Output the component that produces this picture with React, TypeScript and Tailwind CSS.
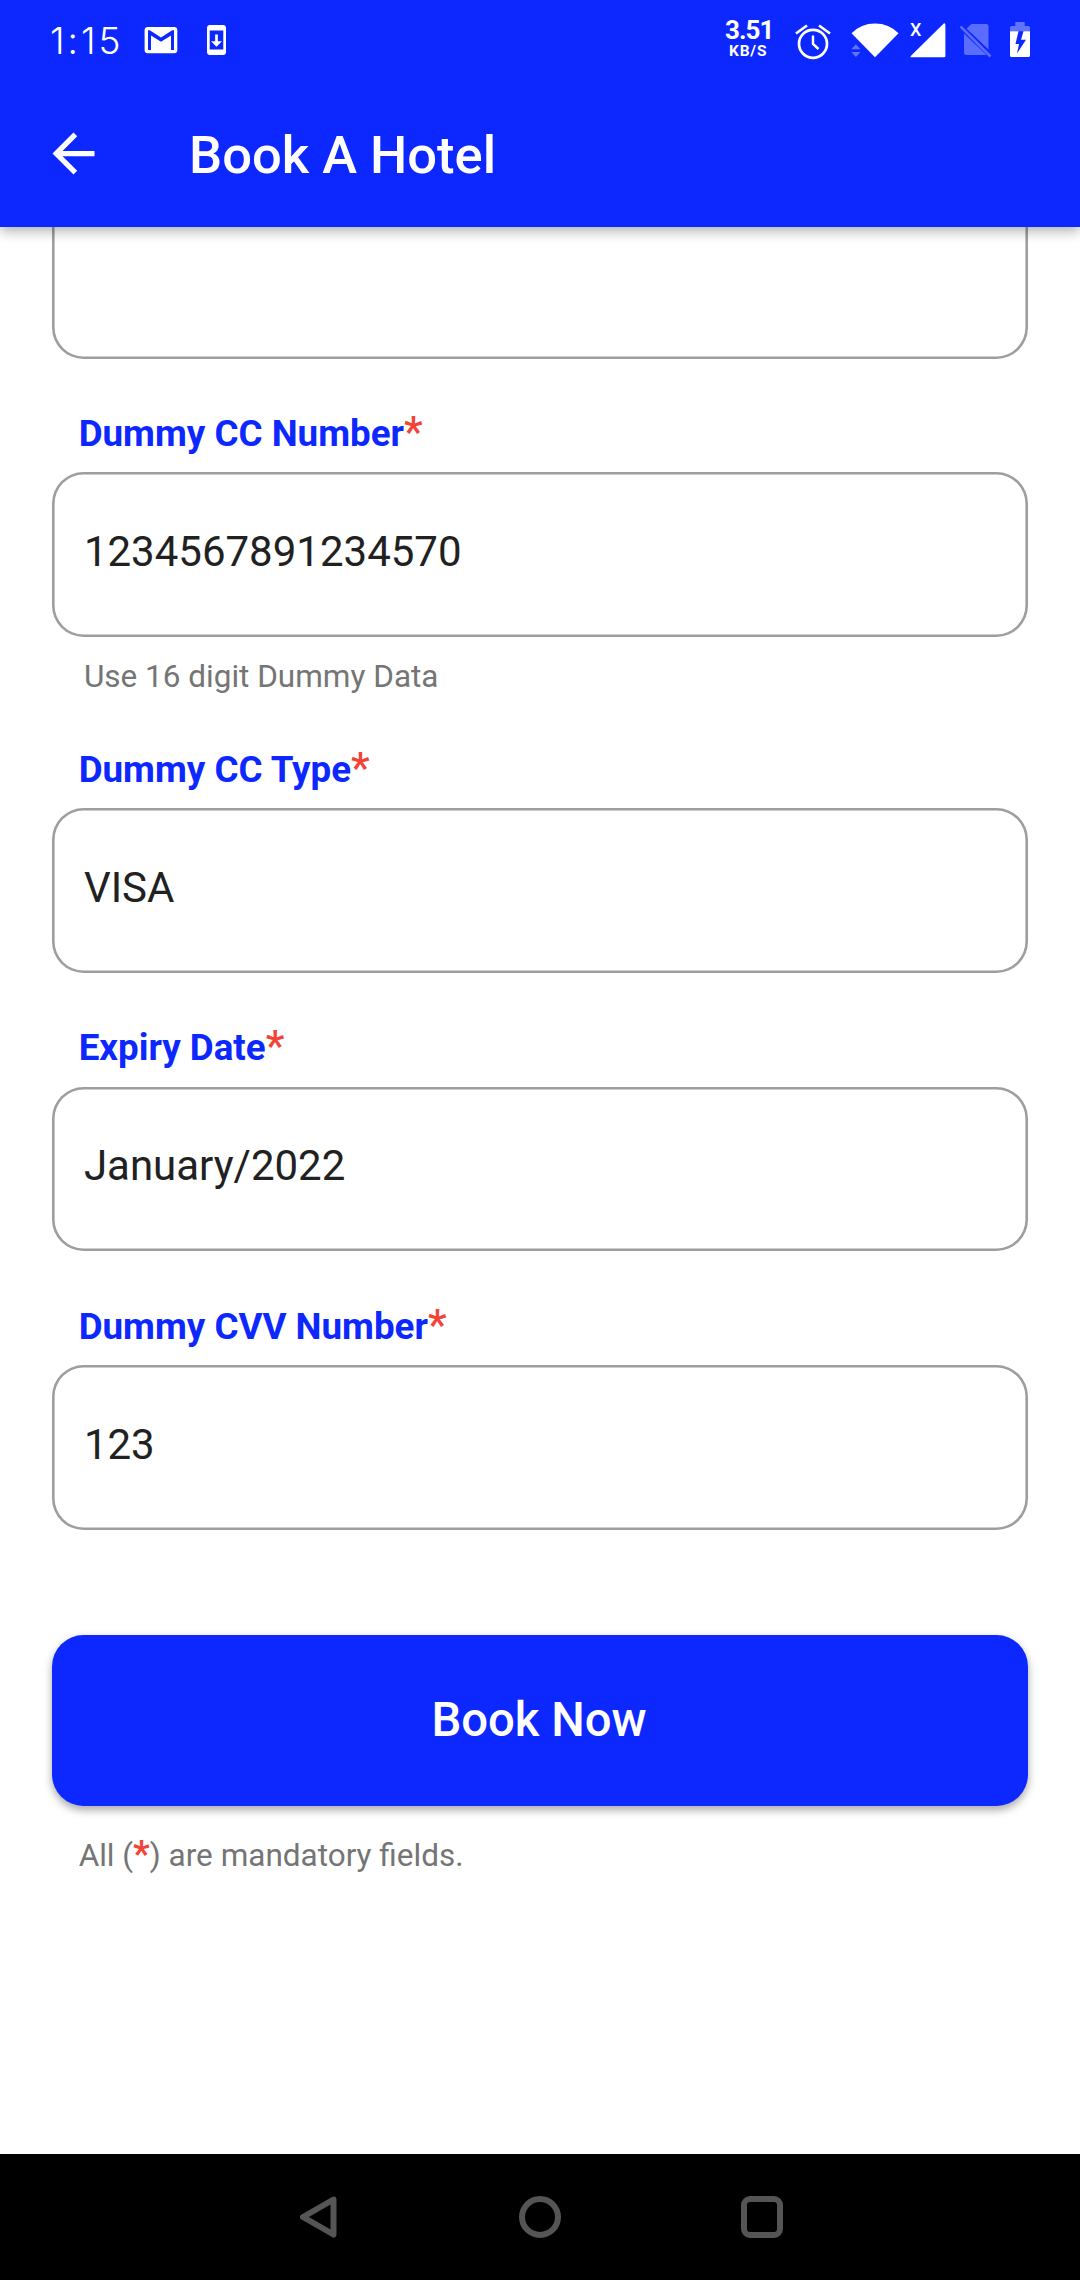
import type { ReactNode } from "react";

function StatusBar() {
  return (
    <div className="flex h-20 items-start pl-[50px] text-white">
      <span className="mt-[17px] w-[94px] font-[Inter] text-[37px] leading-[47px] font-light tracking-[3px] [font-feature-settings:'calt'_0]">
        1:15
      </span>
      <svg className="mt-[26px] h-[28px] w-[34px]" viewBox="0 0 34 28" fill="currentColor">
        <path
          fillRule="evenodd"
          d="M4 1H30Q33.3 1 33.3 4.300V24Q33.300 27.200 30 27.200H4Q.6 27.200 .6 24V4.300Q.6 1 4 1ZM4 4.300V24H7V9.400L17 15.700L27 9.400V24H30V4.300H28.200L17 11.500L5.800 4.300Z"
        />
      </svg>
      <svg className="mt-[25px] ml-[29px] h-[30px] w-[19px]" viewBox="5 1 14 22" preserveAspectRatio="none" fill="currentColor">
        <path d="M17 1.010L7 1c-1.100 0-2 .9-2 2v18c0 1.100.9 2 2 2h10c1.100 0 2-.9 2-2V3c0-1.100-.9-1.990-2-1.990zM17 19H7V5h10v14zm-1-6h-3V8h-2v5H8l4 4 4-4z" />
      </svg>
      <div className="ml-[498px] flex w-[71px] flex-col font-[Roboto] font-bold">
        <span className="mt-[15px] ml-px text-[26px] leading-[30px] tracking-[-1px]">3.51</span>
        <span className="-mt-0.5 ml-[5px] text-[15.500px] leading-[16px] tracking-[0.8px]">KB/S</span>
      </div>
      <svg className="mt-[24px] h-9 w-9 shrink-0" viewBox="0 0 36 36" fill="none" stroke="currentColor">
        <circle cx="18" cy="19.800" r="14" strokeWidth="2.700" />
        <path d="M1 9.500L12 1.500M24 1.500L35 9.500" strokeWidth="2.700" />
        <path d="M18 11.500V20L23.500 25" strokeWidth="2.400" />
      </svg>
      <svg className="mt-[22px] ml-[20px] h-9 w-12 shrink-0" viewBox="0 0 48 36" fill="currentColor">
        <path d="M.5 11.300Q10 1.500 24 1.500T47.500 11.300L24 35.300Z" />
        <path d="M.3 27.200L4.900 22.300L9.500 27.200ZM.3 30L4.900 35L9.500 30Z" fillOpacity=".35" />
      </svg>
      <svg className="mt-[22px] ml-[11px] h-9 w-9 shrink-0 overflow-visible" viewBox="0 0 36 36" fill="currentColor">
        <text x="0" y="14" className="font-[Roboto] text-[18px] font-medium">X</text>
        <path d="M34 1.300Q35.400 1 35.400 3V34Q35.400 35.300 34 35.300H1.500Q-.3 35.300 1 33.800Z" />
      </svg>
      <svg className="mt-[23px] ml-[14px] h-9 w-8 shrink-0" viewBox="0 0 32 36" fill="currentColor" opacity=".32">
        <path d="M11.500 1H26Q28.500 1 28.500 3.500V26.500L6.500 5.500ZM4 10.500L26.500 32H6.500Q4 32 4 29.500Z" />
        <path d="M.5 3.500L30.500 33.500" stroke="currentColor" strokeWidth="2.600" />
      </svg>
      <svg className="mt-[22px] ml-[18px] h-9 w-5 shrink-0" viewBox="0 0 20 36" fill="currentColor">
        <path d="M5.300 0H14.700V4H18.500Q20 4 20 5.500V9.200H0V5.500Q0 4 1.500 4H5.300Z" fillOpacity=".35" />
        <path
          fillRule="evenodd"
          d="M0 9.200H20V33.500Q20 35 18.500 35H1.500Q0 35 0 33.500ZM8.500 9.200L5.500 22H9L7 31.500L16 17.800H11L13.500 9.200Z"
        />
      </svg>
    </div>
  );
}

function AppBar() {
  return (
    <div className="flex h-[147px] items-start pl-[42px] text-white">
      <svg className="mt-[42px] size-[63px]" viewBox="0 0 24 24" fill="currentColor">
        <path d="M20 11H7.830l5.590-5.590L12 4l-8 8 8 8 1.410-1.410L7.830 13H20v-2z" />
      </svg>
      <h1 className="mt-[43px] ml-[84px] text-[52.500px] leading-[64px] font-medium">Book A Hotel</h1>
    </div>
  );
}

function Field({ label, value, helper }: { label: string; value: string; helper?: string }) {
  return (
    <section>
      <div className="h-[113.600px] pt-[53.500px] pl-[26.250px] text-[36.750px] leading-[44px] font-bold whitespace-nowrap text-[#0d28ff]">
        {label}
        <span className="text-[42px] leading-[0] font-medium text-[#f44336]">*</span>
      </div>
      <Box>{value}</Box>
      {helper && (
        <p className="mt-[20.600px] h-[37px] pl-[31.500px] text-[31.500px] leading-[38px] text-[#757575]">{helper}</p>
      )}
    </section>
  );
}

function Box({ children }: { children: ReactNode }) {
  return (
    <div className="flex h-[164.700px] items-center rounded-[31.500px] px-[31.500px] pb-[5px] text-[42px] leading-[50px] text-[#212121] shadow-[inset_0_0_0_2.600px_#9e9e9e]">
      {children}
    </div>
  );
}

function NavBar() {
  return (
    <nav className="flex h-[126px] items-center justify-center gap-[180px] bg-black">
      <svg className="size-[42px]" viewBox="0 0 42 42" fill="none" stroke="#555" strokeWidth="6" strokeLinejoin="round">
        <path d="M36.500 3.500L6 21L36.500 38.500Z" />
      </svg>
      <svg className="size-[42px]" viewBox="0 0 42 42" fill="none" stroke="#555" strokeWidth="6">
        <circle cx="21" cy="21" r="18" />
      </svg>
      <svg className="size-[42px]" viewBox="0 0 42 42" fill="none" stroke="#555" strokeWidth="6">
        <rect x="3" y="3" width="36" height="36" rx="6" />
      </svg>
    </nav>
  );
}

export default function App() {
  return (
    <div className="flex h-[2280px] w-[1080px] flex-col overflow-hidden bg-white font-[Roboto,sans-serif]">
      <header className="relative z-10 h-[227px] shrink-0 bg-[#0d28ff] shadow-[0_4px_12px_rgba(0,0,0,0.32)]">
        <StatusBar />
        <AppBar />
      </header>
      <main className="flex-1 overflow-hidden px-[52.400px]">
        <div className="-mt-[32.900px]">
          <Box>{null}</Box>
        </div>
        <Field label="Dummy CC Number" value="1234567891234570" helper="Use 16 digit Dummy Data" />
        <Field label="Dummy CC Type" value="VISA" />
        <Field label="Expiry Date" value="January/2022" />
        <Field label="Dummy CVV Number" value="123" />
        <button className="mt-[105.500px] flex h-[170.600px] w-full items-center justify-center rounded-[31.500px] bg-[#0d28ff] pr-[2px] text-[47.250px] leading-[56px] font-medium text-white shadow-[0_4px_8px_rgba(0,0,0,0.35)]">
          Book Now
        </button>
        <p className="mt-[31px] pl-[26.250px] text-[31.500px] leading-[38px] text-[#757575]">
          All (<span className="text-[36.750px] leading-[0] font-bold text-[#f44336]">*</span>) are mandatory fields.
        </p>
      </main>
      <NavBar />
    </div>
  );
}
